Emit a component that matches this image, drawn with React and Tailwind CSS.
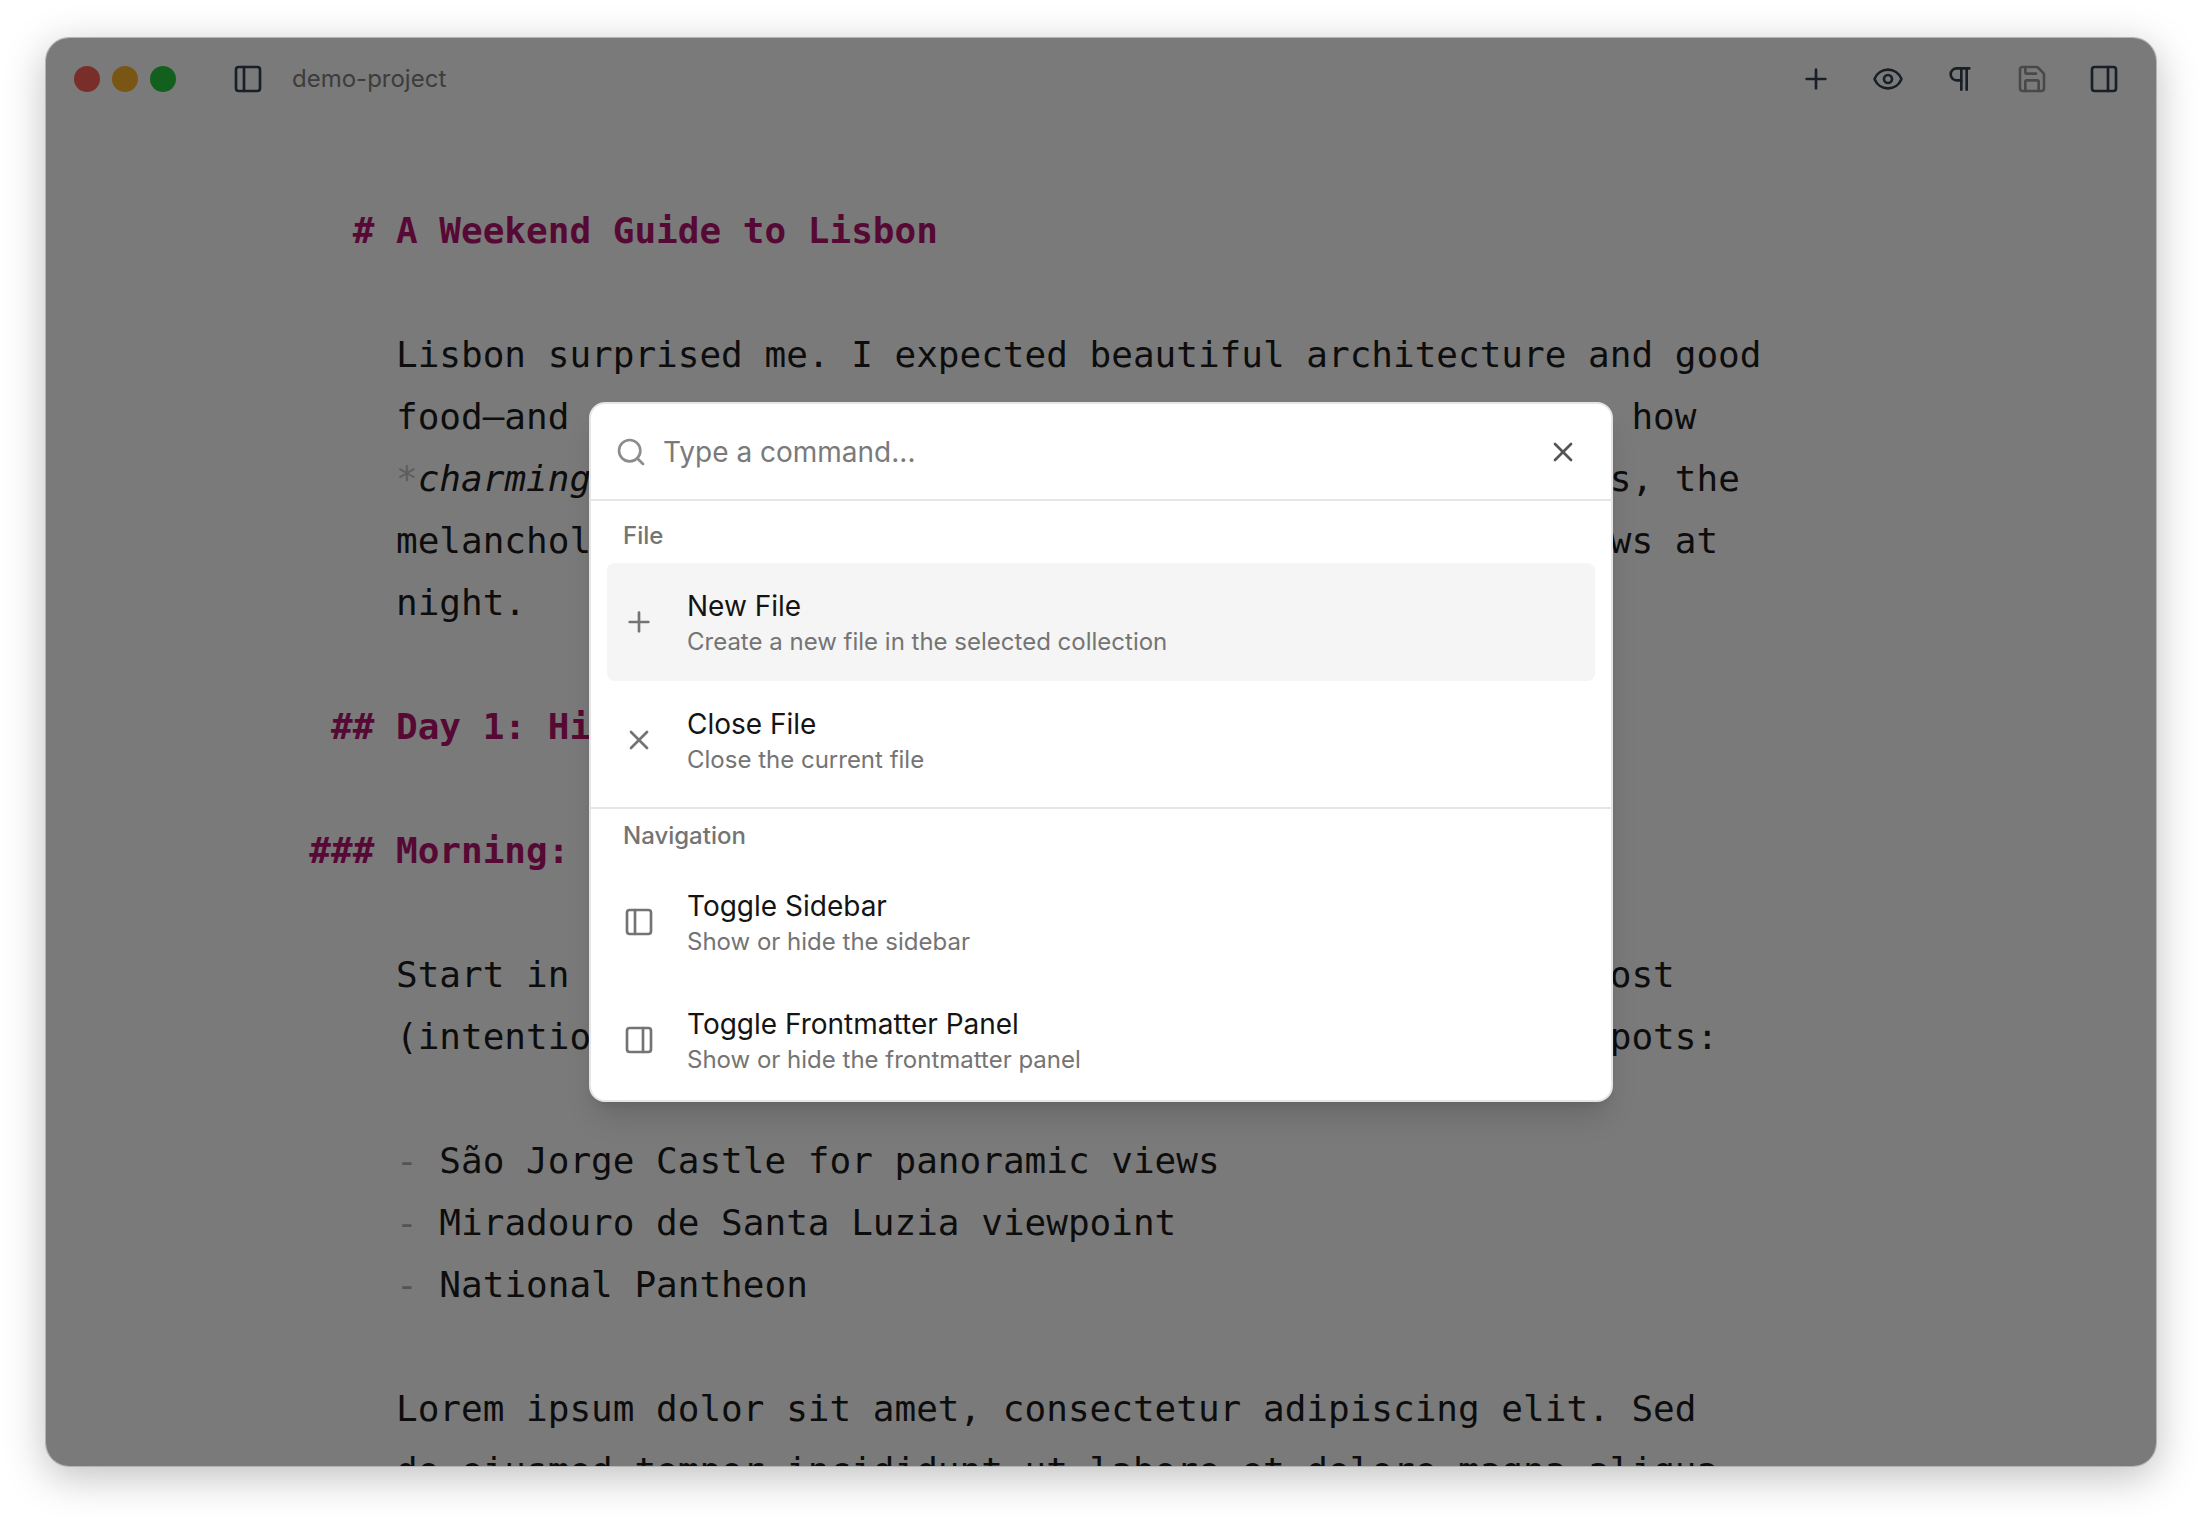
import { useState } from 'react'
import { Eye, PanelLeft, PanelRight, Pilcrow, Plus, Save, Search, X } from 'lucide-react'

const toolbarActions = [
  { label: 'New file', icon: Plus },
  { label: 'Toggle preview', icon: Eye },
  { label: 'Show formatting marks', icon: Pilcrow },
  { label: 'Save', icon: Save, disabled: true },
  { label: 'Toggle frontmatter panel', icon: PanelRight }
]

const commandGroups = [
  {
    heading: 'File',
    commands: [
      { title: 'New File', description: 'Create a new file in the selected collection', icon: Plus },
      { title: 'Close File', description: 'Close the current file', icon: X }
    ]
  },
  {
    heading: 'Navigation',
    commands: [
      { title: 'Toggle Sidebar', description: 'Show or hide the sidebar', icon: PanelLeft },
      { title: 'Toggle Frontmatter Panel', description: 'Show or hide the frontmatter panel', icon: PanelRight }
    ]
  }
]

const TitleBar = () => (
  <header className="flex h-[82px] shrink-0 items-center pl-7 pr-9">
    <div className="flex gap-3">
      <span className="size-[26px] rounded-full bg-[#ff6058]" />
      <span className="size-[26px] rounded-full bg-[#fdb52a]" />
      <span className="size-[26px] rounded-full bg-[#28c840]" />
    </div>
    <button type="button" aria-label="Toggle sidebar" className="ml-14 text-gray-700">
      <PanelLeft size={32} />
    </button>
    <span className="ml-7 text-2xl text-[#808080]">demo-project</span>
    <div className="ml-auto flex gap-10">
      {toolbarActions.map(({ label, icon: Icon, disabled }) => (
        <button
          key={label}
          type="button"
          aria-label={label}
          disabled={disabled}
          className="text-gray-700 disabled:text-[#9a9a9a]"
        >
          <Icon size={32} />
        </button>
      ))}
    </div>
  </header>
)

// One markdown block, with its heading marks hanging in the left gutter
const Block = ({ marks, children }) => (
  <div className="grid grid-cols-[1fr_minmax(0,1410px)_1fr]">
    <span className="whitespace-pre text-right font-bold text-[#b5146e]">{marks && `${marks} `}</span>
    <div className="whitespace-pre">{children}</div>
  </div>
)

const Editor = () => (
  <article className="flex min-h-0 flex-1 flex-col gap-[62px] overflow-hidden pt-20 font-['DejaVu_Sans_Mono',monospace] text-4xl leading-[62px] text-[#1c1c1c]">
    <Block marks="#">
      <h1 className="font-bold text-[#b5146e]">A Weekend Guide to Lisbon</h1>
    </Block>
    <Block>
      <p>
        {'Lisbon surprised me. I expected beautiful architecture and good\n'}
        {"food—and found both. What I didn't expect was altogether how\n"}
        <span className="text-[#c4c4c4]">*</span>
        <em>charming</em>
        <span className="text-[#c4c4c4]">*</span>
        {' it would be. The pastel tiles, hilltop streets, the\n'}
        {'melancholy of fado drifting out from the candlelit windows at\n'}
        night.
      </p>
    </Block>
    <Block marks="##">
      <h2 className="font-bold text-[#b5146e]">Day 1: Historic Heart</h2>
    </Block>
    <Block marks="###">
      <h3 className="font-bold text-[#b5146e]">Morning: Alfama</h3>
    </Block>
    <Block>
      <p>
        {'Start in Alfama, the oldest neighborhood anywhere. Get lost\n'}
        {'(intentionally) in its winding lanes, then visit these spots:'}
      </p>
    </Block>
    <Block>
      <ul>
        {['São Jorge Castle for panoramic views', 'Miradouro de Santa Luzia viewpoint', 'National Pantheon'].map((place) => (
          <li key={place}>
            <span className="text-[#b0b0b0]">{'- '}</span>
            {place}
          </li>
        ))}
      </ul>
    </Block>
    <Block>
      <p>
        {'Lorem ipsum dolor sit amet, consectetur adipiscing elit. Sed\n'}
        {'do eiusmod tempor incididunt ut labore et dolore magna aliqua'}
      </p>
    </Block>
  </article>
)

const CommandPalette = () => {
  const [query, setQuery] = useState('')
  const [selected, setSelected] = useState('New File')

  return (
    <div
      role="dialog"
      aria-label="Command palette"
      className="w-full max-w-5xl overflow-hidden rounded-2xl border-2 border-[#e5e5e5] bg-white shadow-[0_20px_30px_-6px_rgba(0,0,0,0.14),0_8px_12px_-8px_rgba(0,0,0,0.14)]"
    >
      <div className="flex h-[97px] items-center gap-4 border-b-2 border-[#e5e5e5] pl-6 pr-8">
        <Search size={32} className="shrink-0 text-[#8c8c8c]" />
        <input
          type="text"
          aria-label="Command"
          placeholder="Type a command..."
          value={query}
          onChange={(e) => setQuery(e.target.value)}
          className="min-w-0 flex-1 text-[28px] leading-10 text-[#1c1c1c] outline-none placeholder:text-[#7a7a7a]"
        />
        <button type="button" aria-label="Close" className="text-[#555555]">
          <X size={32} />
        </button>
      </div>
      {commandGroups.map(({ heading, commands }) => (
        <section key={heading} className="border-[#e5e5e5] px-4 last:pb-px not-last:border-b-2 not-last:py-2">
          <h4 className="px-4 py-3 text-2xl leading-[30px] font-medium text-[#747474]">{heading}</h4>
          {commands.map(({ title, description, icon: Icon }) => (
            <button
              key={title}
              type="button"
              onMouseEnter={() => setSelected(title)}
              className={`flex w-full items-center gap-8 rounded-lg px-4 py-[23px] text-left ${
                selected === title ? 'bg-[#f5f5f5]' : ''
              }`}
            >
              <Icon size={32} className="shrink-0 text-[#747474]" />
              <span className="flex flex-col">
                <span className="text-[28px] leading-10 text-[#141414]">{title}</span>
                <span className="text-2xl leading-8 text-[#747474]">{description}</span>
              </span>
            </button>
          ))}
        </section>
      ))}
    </div>
  )
}

export default function App() {
  return (
    <main className="flex h-screen flex-col bg-white px-[45px] pt-[37px] pb-[53px] font-['Inter',sans-serif]">
      <div className="relative flex min-h-0 flex-1 flex-col overflow-hidden rounded-3xl border border-[#b4b4b4] bg-white shadow-[0_10px_40px_rgba(0,0,0,0.25)]">
        <TitleBar />
        <Editor />
        <div className="absolute inset-0 flex items-center justify-center bg-black/52">
          <CommandPalette />
        </div>
      </div>
    </main>
  )
}
